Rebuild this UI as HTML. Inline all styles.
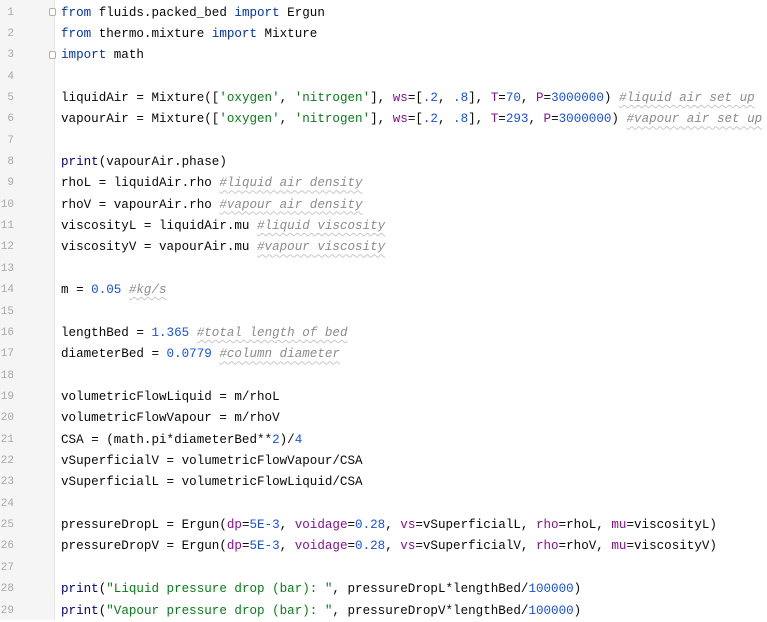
<!DOCTYPE html>
<html><head><meta charset="utf-8">
<style>
html,body{margin:0;padding:0;background:#fff;width:767px;height:620px;overflow:hidden}
.g{position:absolute;left:0;top:0;width:54px;height:620px;background:#f5f5f5;border-right:1px solid #e6e6e6}
.ln{position:absolute;left:0;width:14px;text-align:right;font:11px "Liberation Mono",monospace;color:#a8a8a8}
.code{position:absolute;left:61px;top:2.5px;font-family:"Liberation Mono",monospace;font-size:12.57px;line-height:21.36px;color:#080808;white-space:pre}
.k{color:#0033b3}.n{color:#1750eb}.s{color:#067d17}.p{color:#871094}.b{color:#000080}
.c{color:#8c8c8c;font-style:italic;text-decoration:underline wavy #c8c8c8;text-decoration-thickness:1px;text-underline-offset:3px}
.f{position:absolute;left:49px;width:7px;height:8px;border:1px solid #b0b0b0;border-radius:2px;background:#fff;box-sizing:border-box}
</style></head><body>
<div class="g"></div>
<div class="f" style="top:8px"></div>
<div class="f" style="top:51px"></div>
<div class="code"><span class="k">from</span> fluids.packed_bed <span class="k">import</span> Ergun
<span class="k">from</span> thermo.mixture <span class="k">import</span> Mixture
<span class="k">import</span> math

liquidAir = Mixture([<span class="s">'oxygen'</span>, <span class="s">'nitrogen'</span>], <span class="p">ws</span>=[<span class="n">.2</span>, <span class="n">.8</span>], <span class="p">T</span>=<span class="n">70</span>, <span class="p">P</span>=<span class="n">3000000</span>) <span class="c">#liquid air set up</span>
vapourAir = Mixture([<span class="s">'oxygen'</span>, <span class="s">'nitrogen'</span>], <span class="p">ws</span>=[<span class="n">.2</span>, <span class="n">.8</span>], <span class="p">T</span>=<span class="n">293</span>, <span class="p">P</span>=<span class="n">3000000</span>) <span class="c">#vapour air set up</span>

<span class="b">print</span>(vapourAir.phase)
rhoL = liquidAir.rho <span class="c">#liquid air density</span>
rhoV = vapourAir.rho <span class="c">#vapour air density</span>
viscosityL = liquidAir.mu <span class="c">#liquid viscosity</span>
viscosityV = vapourAir.mu <span class="c">#vapour viscosity</span>

m = <span class="n">0.05</span> <span class="c">#kg/s</span>

lengthBed = <span class="n">1.365</span> <span class="c">#total length of bed</span>
diameterBed = <span class="n">0.0779</span> <span class="c">#column diameter</span>

volumetricFlowLiquid = m/rhoL
volumetricFlowVapour = m/rhoV
CSA = (math.pi*diameterBed**<span class="n">2</span>)/<span class="n">4</span>
vSuperficialV = volumetricFlowVapour/CSA
vSuperficialL = volumetricFlowLiquid/CSA

pressureDropL = Ergun(<span class="p">dp</span>=<span class="n">5E-3</span>, <span class="p">voidage</span>=<span class="n">0.28</span>, <span class="p">vs</span>=vSuperficialL, <span class="p">rho</span>=rhoL, <span class="p">mu</span>=viscosityL)
pressureDropV = Ergun(<span class="p">dp</span>=<span class="n">5E-3</span>, <span class="p">voidage</span>=<span class="n">0.28</span>, <span class="p">vs</span>=vSuperficialV, <span class="p">rho</span>=rhoV, <span class="p">mu</span>=viscosityV)

<span class="b">print</span>(<span class="s">"Liquid pressure drop (bar): "</span>, pressureDropL*lengthBed/<span class="n">100000</span>)
<span class="b">print</span>(<span class="s">"Vapour pressure drop (bar): "</span>, pressureDropV*lengthBed/<span class="n">100000</span>)</div>
<div class="ln" style="top:2.5px;line-height:21.36px;white-space:pre">1
2
3
4
5
6
7
8
9
10
11
12
13
14
15
16
17
18
19
20
21
22
23
24
25
26
27
28
29</div>
</body></html>
